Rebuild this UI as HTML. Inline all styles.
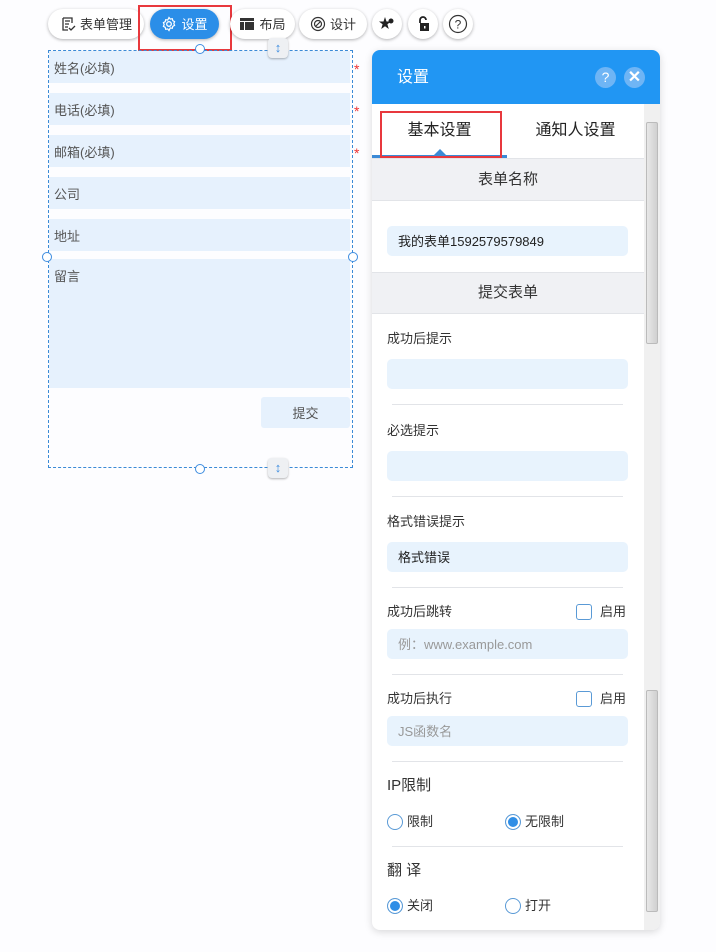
<!DOCTYPE html>
<html><head><meta charset="utf-8"><style>
*{box-sizing:border-box;margin:0;padding:0}
body{width:716px;height:952px;background:#fdfdff;font-family:"Liberation Sans","Noto Sans CJK SC",sans-serif;position:relative;overflow:hidden;color:#333}
.a{position:absolute}
.btn{position:absolute;top:9px;height:30px;border-radius:15px;background:#fff;box-shadow:0 1px 3px rgba(0,0,0,.3);font-size:13px;display:flex;align-items:center;justify-content:center;color:#333;line-height:1}
.f{position:absolute;left:49px;width:301px;height:32px;background:#e6f1fd;font-size:13px;color:#555;padding:3px 5px 0;line-height:30px}
.star{position:absolute;left:354px;color:#e33;font-size:14px;line-height:1}
.in{position:absolute;left:387px;width:241px;height:30px;background:#e8f3fd;border-radius:5px;font-size:13px;padding:1px 11px 0;line-height:30px;color:#222}
.lb{position:absolute;left:387px;font-size:13px;color:#333;line-height:16px}
.hr{position:absolute;left:392px;width:231px;height:1px;background:#e2e4e8}
.cb{position:absolute;left:576px;width:16px;height:16px;border:1.5px solid #5a9ad6;border-radius:3px;background:#fff}
.rd{position:absolute;width:16px;height:16px;border:1.5px solid #5a9ad6;border-radius:50%;background:#fff}
.rd.on{background:#2f8ee6;box-shadow:inset 0 0 0 2px #fff}
.h{position:absolute;left:372px;width:272px;background:#f0f1f4;border-top:1px solid #e2e4e8;border-bottom:1px solid #e2e4e8;text-align:center;font-size:15px;color:#333}
.hd{position:absolute;width:10px;height:10px;border:1.3px solid #3f8de0;border-radius:50%;background:#fff}
</style></head><body>
<div class="btn" style="left:48px;width:96px">
<svg width="16" height="16" viewBox="0 0 16 16" style="margin-right:4px"><path d="M3 2h9v5M3 2v12h5M5 5h5M5 8h4M5 11h3M9 12l2 2 4-4" fill="none" stroke="#333" stroke-width="1.3"/></svg>表单管理</div>
<div class="btn" style="left:150px;width:69px;background:#2b8ee8;color:#fff">
<svg width="16" height="16" viewBox="0 0 16 16" style="margin-right:4px"><circle cx="8" cy="8" r="2.3" fill="none" stroke="#fff" stroke-width="1.3"/><path d="M8 1.5l1.3 1.6 2-.4.5 2 1.8.9-.8 1.9.8 1.9-1.8.9-.5 2-2-.4L8 14.5l-1.3-1.6-2 .4-.5-2-1.8-.9.8-1.9-.8-1.9 1.8-.9.5-2 2 .4z" fill="none" stroke="#fff" stroke-width="1.2"/></svg>设置</div>
<div class="a" style="left:138px;top:5px;width:94px;height:46px;border:2px solid #e8383d"></div>
<div class="btn" style="left:230px;width:65px"><svg width="16" height="16" viewBox="0 0 16 16" style="margin-right:4px"><rect x="1" y="2" width="14" height="3" fill="#333"/><rect x="1" y="6" width="4" height="8" fill="#333"/><rect x="6" y="6" width="9" height="8" fill="#333"/></svg>布局</div>
<div class="btn" style="left:299px;width:68px"><svg width="16" height="16" viewBox="0 0 16 16" style="margin-right:4px"><circle cx="8" cy="8" r="6.5" fill="none" stroke="#333" stroke-width="1.2"/><circle cx="8" cy="8" r="3.5" fill="none" stroke="#333" stroke-width="1.2"/><path d="M6 10l4-4" stroke="#333" stroke-width="1.2"/></svg>设计</div>
<div class="btn" style="left:372px;width:30px"><svg width="16" height="16" viewBox="0 0 16 16"><path d="M6 1l1.5 4.5H12L8.4 8.3 9.8 13 6 10.2 2.2 13l1.4-4.7L0 5.5h4.5z" fill="#222"/><circle cx="12" cy="5" r="2.5" fill="#222"/></svg></div>
<div class="btn" style="left:408px;width:30px"><svg width="16" height="16" viewBox="0 0 16 16"><path d="M5 7V4a3 3 0 0 1 6 0" fill="none" stroke="#222" stroke-width="1.8"/><rect x="5" y="7" width="9" height="8" fill="#222"/><rect x="9" y="10" width="1.5" height="2.5" fill="#fff"/></svg></div>
<div class="btn" style="left:443px;width:30px"><svg width="20" height="20" viewBox="0 0 20 20"><circle cx="10" cy="10" r="8.5" fill="none" stroke="#333" stroke-width="1.2"/><text x="10" y="14.5" font-size="12" text-anchor="middle" fill="#333" font-family="Liberation Sans">?</text></svg></div>

<div class="a" style="left:48px;top:50px;width:305px;height:418px;border:1px dashed #3b8ad6"></div>
<div class="f" style="top:51px">姓名(必填)</div><div class="star" style="top:62px">*</div>
<div class="f" style="top:93px">电话(必填)</div><div class="star" style="top:104px">*</div>
<div class="f" style="top:135px">邮箱(必填)</div><div class="star" style="top:146px">*</div>
<div class="f" style="top:177px">公司</div>
<div class="f" style="top:219px">地址</div>
<div class="f" style="top:259px;height:129px">留言</div>
<div class="a" style="left:261px;top:397px;width:89px;height:31px;background:#e6f1fd;border-radius:3px;font-size:13px;color:#555;text-align:center;line-height:33px">提交</div>
<div class="hd" style="left:195px;top:44px"></div><div class="hd" style="left:42px;top:252px"></div><div class="hd" style="left:348px;top:252px"></div><div class="hd" style="left:195px;top:464px"></div>
<div class="a" style="left:268px;top:38px;width:20px;height:20px;border-radius:4px;background:#eef0f3;box-shadow:0 1px 2px rgba(0,0,0,.3);color:#3f8de0;font-size:13px;text-align:center;line-height:20px">↕</div>
<div class="a" style="left:268px;top:458px;width:20px;height:20px;border-radius:4px;background:#eef0f3;box-shadow:0 1px 2px rgba(0,0,0,.3);color:#3f8de0;font-size:13px;text-align:center;line-height:20px">↕</div>

<div class="a" style="left:372px;top:50px;width:288px;height:880px;background:#fff;border-radius:8px;box-shadow:0 2px 8px rgba(0,0,0,.15);overflow:hidden">
<div class="a" style="left:0;top:0;width:288px;height:54px;background:#2196f3"></div>
<div class="a" style="left:25px;top:19px;color:#fff;font-size:16px;line-height:18px">设置</div>
<div class="a" style="left:223px;top:17px;width:21px;height:21px;border-radius:50%;background:#6fb5f5;color:#fff;font-size:14px;text-align:center;line-height:21px">?</div>
<div class="a" style="left:252px;top:17px;width:21px;height:21px;border-radius:50%;background:#6fb5f5;color:#fff;font-size:16px;font-weight:bold;text-align:center;line-height:21px">✕</div>
<div class="a" style="left:272px;top:54px;width:16px;height:826px;background:#f0f0f0"></div>
<div class="a" style="left:274px;top:72px;width:12px;height:222px;background:linear-gradient(90deg,#e8e8e8,#d0d0d0);border:1px solid #bbb;border-radius:2px"></div>
<div class="a" style="left:274px;top:640px;width:12px;height:222px;background:linear-gradient(90deg,#e8e8e8,#d0d0d0);border:1px solid #bbb;border-radius:2px"></div>
</div>
<div class="a" style="left:372px;top:122px;width:135px;text-align:center;font-size:16px;color:#222;line-height:18px">基本设置</div>
<div class="a" style="left:507px;top:122px;width:137px;text-align:center;font-size:16px;color:#222;line-height:18px">通知人设置</div>
<div class="a" style="left:372px;top:155px;width:135px;height:3px;background:#3b8ad6"></div>
<div class="a" style="left:434px;top:149px;width:0;height:0;border-left:6px solid transparent;border-right:6px solid transparent;border-bottom:6px solid #3b8ad6"></div>
<div class="a" style="left:380px;top:111px;width:122px;height:47px;border:2px solid #e8383d"></div>
<div class="h" style="top:158px;height:43px;line-height:41px">表单名称</div>
<div class="in" style="top:226px">我的表单1592579579849</div>
<div class="h" style="top:272px;height:42px;line-height:40px">提交表单</div>
<div class="lb" style="top:331px">成功后提示</div><div class="in" style="top:359px"></div><div class="hr" style="top:404px"></div>
<div class="lb" style="top:423px">必选提示</div><div class="in" style="top:451px"></div><div class="hr" style="top:496px"></div>
<div class="lb" style="top:514px">格式错误提示</div><div class="in" style="top:542px">格式错误</div><div class="hr" style="top:587px"></div>
<div class="lb" style="top:604px">成功后跳转</div><div class="cb" style="top:604px"></div><div class="lb" style="left:600px;top:604px">启用</div>
<div class="in" style="top:629px;color:#999">例：www.example.com</div><div class="hr" style="top:674px"></div>
<div class="lb" style="top:691px">成功后执行</div><div class="cb" style="top:691px"></div><div class="lb" style="left:600px;top:691px">启用</div>
<div class="in" style="top:716px;color:#999">JS函数名</div><div class="hr" style="top:761px"></div>
<div class="lb" style="top:777px;font-size:15px;line-height:18px">IP限制</div>
<div class="rd" style="left:387px;top:814px"></div><div class="lb" style="left:407px;top:814px">限制</div>
<div class="rd on" style="left:505px;top:814px"></div><div class="lb" style="left:525px;top:814px">无限制</div>
<div class="hr" style="top:846px"></div>
<div class="lb" style="top:862px;font-size:15px;line-height:18px">翻 译</div>
<div class="rd on" style="left:387px;top:898px"></div><div class="lb" style="left:407px;top:898px">关闭</div>
<div class="rd" style="left:505px;top:898px"></div><div class="lb" style="left:525px;top:898px">打开</div>
</body></html>
